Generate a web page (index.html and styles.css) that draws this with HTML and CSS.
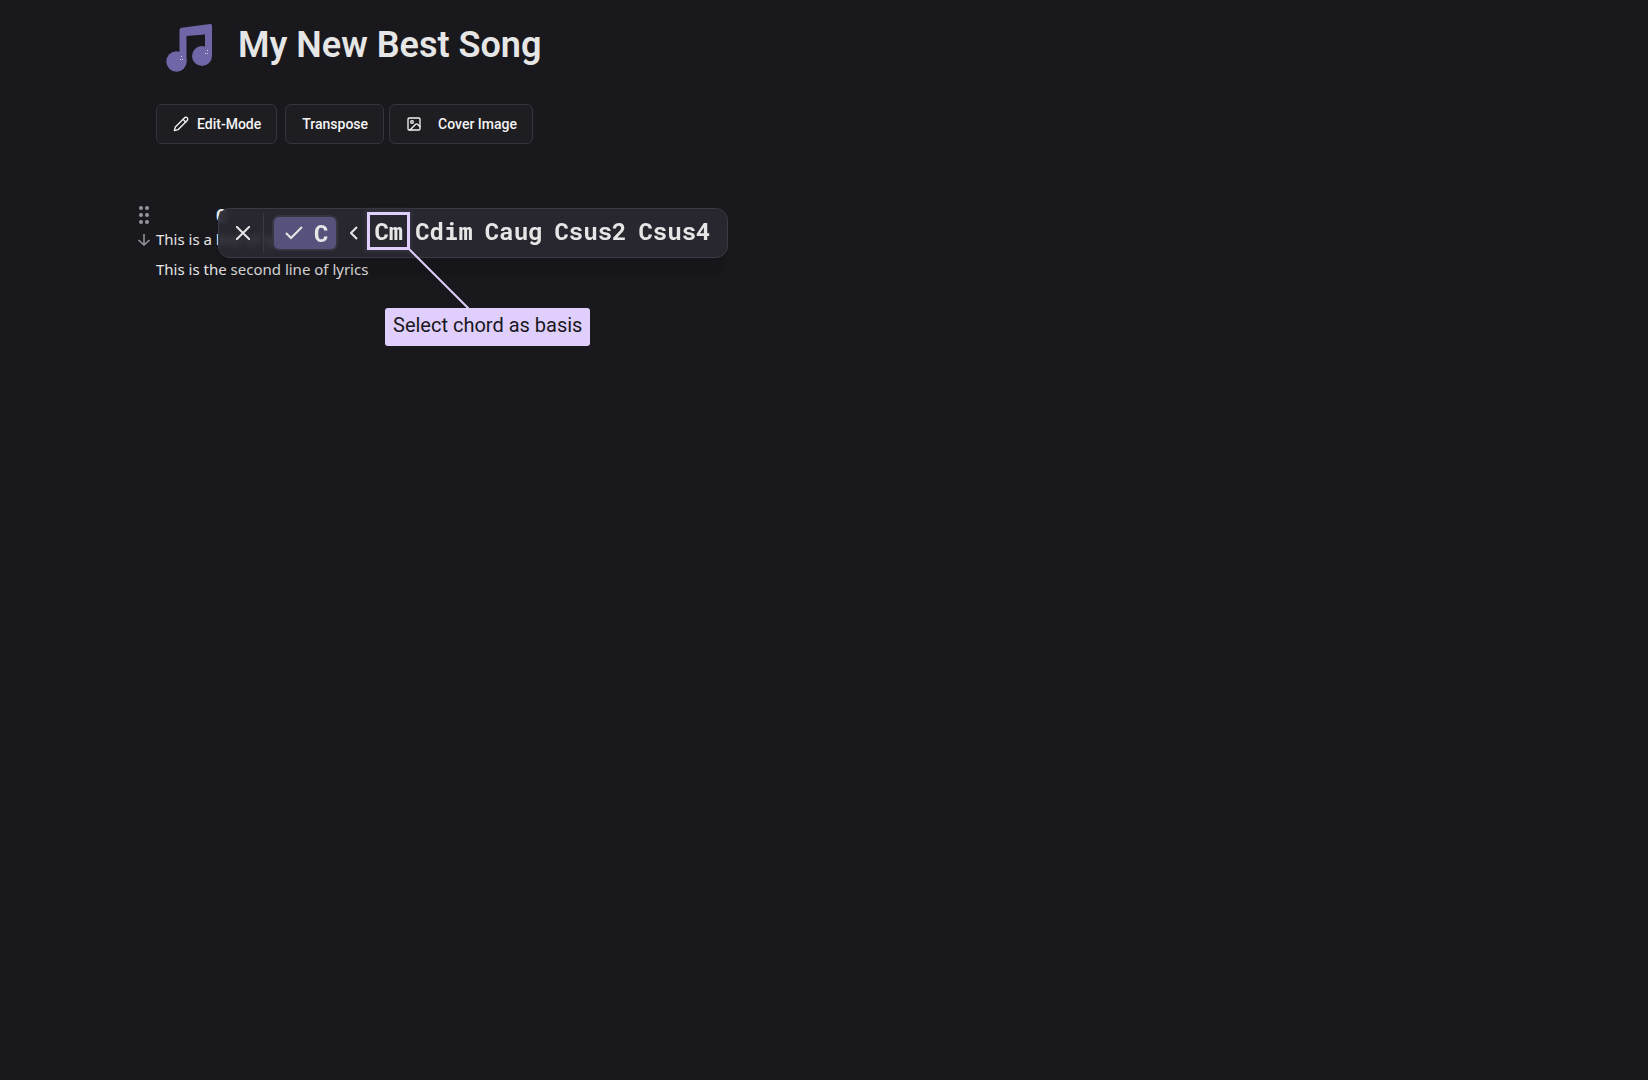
FILE: index.html
```html
<!DOCTYPE html>
<html lang="en">

<head>
    <meta charset="UTF-8">
    <meta name="viewport" content="width=device-width, initial-scale=1.0">
    <title>My New Best Song</title>
    <link rel="stylesheet" href="styles.css">
</head>

<body>
    <main class="page">
        <header class="title">
            <svg class="note" viewBox="0 0 48 50" aria-hidden="true">
                <path d="M13.500 7Q13.500 5 15.500 4.700L44 1Q46 .8 46 2.500V33H39V11.500L20.500 13V39H13.500Z" />
                <circle cx="10.500" cy="38.500" r="10.200" />
                <circle cx="36" cy="33" r="10" />
                <g class="spark">
                    <rect x="14" y="36" width="1" height="1" />
                    <rect x="16" y="36" width="1" height="1" />
                    <rect x="15" y="33" width="1" height="1" />
                    <rect x="39" y="30" width="1" height="1" />
                    <rect x="41" y="30" width="1" height="1" />
                    <rect x="41" y="27" width="1" height="1" />
                </g>
            </svg>
            <h1>My New Best Song</h1>
        </header>

        <div class="actions">
            <button type="button" class="edit">
                <svg class="icon" viewBox="0 0 24 24" aria-hidden="true">
                    <path d="M17 3a2.850 2.850 0 1 1 4 4L7.500 20.500 2 22l1.500-5.500Z" />
                    <path d="m15 5 4 4" />
                </svg>
                Edit-Mode
            </button>
            <button type="button">Transpose</button>
            <button type="button" class="cover">
                <svg class="icon" viewBox="0 0 24 24" aria-hidden="true">
                    <rect x="3" y="3" width="18" height="18" rx="2" />
                    <circle cx="9" cy="9" r="2" />
                    <path d="m6 21 8.500-8.500a2 2 0 0 1 2.800 0L21 16" />
                </svg>
                Cover Image
            </button>
        </div>

        <section class="song">
            <div class="handles">
                <svg class="drag" viewBox="0 0 10 18" aria-hidden="true">
                    <circle cx="2" cy="2" r="2" />
                    <circle cx="8" cy="2" r="2" />
                    <circle cx="2" cy="9" r="2" />
                    <circle cx="8" cy="9" r="2" />
                    <circle cx="2" cy="16" r="2" />
                    <circle cx="8" cy="16" r="2" />
                </svg>
                <svg class="down" viewBox="0 0 24 24" aria-hidden="true">
                    <path d="M12 0V22M1 12L12 22L23 12" />
                </svg>
            </div>
            <p class="chord">C</p>
            <p class="line">This is a line of lyrics</p>
            <p class="line">This is the second line of lyrics</p>

            <div class="picker">
                <button type="button" class="close" aria-label="Close">
                    <svg viewBox="0 0 14 14" aria-hidden="true">
                        <path d="M0 0L14 14M14 0L0 14" />
                    </svg>
                </button>
                <button type="button" class="current">
                    <svg viewBox="0 0 18 14" aria-hidden="true">
                        <path d="M1 7L6 12L17 1" />
                    </svg>
                    C
                </button>
                <button type="button" class="back" aria-label="Back">
                    <svg viewBox="0 0 8 14" aria-hidden="true">
                        <path d="M7 1L1 7L7 13" />
                    </svg>
                </button>
                <div class="chords">
                    <button type="button" class="marked">Cm</button>
                    <button type="button">Cdim</button>
                    <button type="button">Caug</button>
                    <button type="button">Csus2</button>
                    <button type="button">Csus4</button>
                </div>
            </div>

            <svg class="pointer" viewBox="0 0 60 60" aria-hidden="true">
                <path d="M0 0L60 60" />
            </svg>
            <div class="callout">Select chord as basis</div>
        </section>
    </main>
</body>

</html>
```
FILE: styles.css
```css
* {
    box-sizing: border-box;
}

body {
    margin: 0;
    background: #19181c;
    color: #e6e6e6;
    font-family: Roboto, "Liberation Sans", sans-serif;
}

h1,
p {
    margin: 0;
}

button {
    margin: 0;
    padding: 0;
    border: 0;
    background: none;
    color: inherit;
    font: inherit;
}

svg {
    display: block;
    flex: none;
    fill: none;
    stroke: currentColor;
    stroke-width: 2;
}

.page {
    min-height: 100vh;
    padding: 16px 156px;
}

/* title */
.title {
    display: flex;
    align-items: center;
    gap: 24px;
    height: 64px;
    padding-left: 10px;
}

.title h1 {
    padding-bottom: 6px;
    font-size: 36px;
    line-height: 48px;
    font-weight: 600;
}

.note {
    width: 48px;
    height: 50px;
    fill: #6e66a6;
    stroke: none;
}

.spark {
    fill: #d8d4f0;
}

/* buttons under the title */
.actions {
    display: flex;
    gap: 5px;
    margin-top: 24px;
}

.actions button {
    display: flex;
    align-items: center;
    gap: 8px;
    height: 40px;
    padding: 0 15px 1px 16px;
    border: 1px solid #35343f;
    border-radius: 6px;
    background: #1e1d22;
    color: #f4f4f4;
    font-size: 14px;
    font-weight: 500;
}

.actions .edit {
    margin-right: 3px;
}

.actions .cover {
    gap: 16px;
}

.icon {
    width: 16px;
    height: 16px;
    stroke-linecap: round;
    stroke-linejoin: round;
}

/* lyrics */
.song {
    position: relative;
    margin-top: 60px;
    font-family: "Noto Sans", "Open Sans", sans-serif;
}

.handles {
    position: absolute;
    top: 2px;
    left: -18px;
    color: #97969c;
}

.drag {
    width: 10px;
    height: 18px;
    margin: 0 1px 10px;
    fill: currentColor;
    stroke: none;
}

.down {
    width: 12px;
    height: 12px;
    stroke-width: 3;
}

.chord {
    margin-bottom: -2px;
    padding-left: 60px;
    font-family: "Roboto Mono", "DejaVu Sans Mono", monospace;
    font-size: 18px;
    line-height: 22px;
    font-weight: 700;
}

.line {
    font-size: 15px;
    line-height: 30px;
}

/* chord picker */
.picker {
    position: absolute;
    top: 4px;
    left: 62px;
    display: flex;
    align-items: center;
    height: 50px;
    padding-right: 17px;
    border: 1px solid #3a3a44;
    border-radius: 12px;
    background: rgba(43, 42, 51, .84);
    box-shadow: 0 20px 4px -2px rgba(0, 0, 0, .1);
    backdrop-filter: blur(3px);
    font-family: "Roboto Mono", "DejaVu Sans Mono", monospace;
    font-size: 24px;
    line-height: 32px;
    font-weight: 700;
}

.close {
    height: 40px;
    padding: 0 13px 0 17px;
    border-right: 1px solid #3a3a44;
}

.close svg {
    width: 14px;
    height: 14px;
}

.current {
    display: flex;
    align-items: center;
    gap: 11px;
    height: 32px;
    margin-left: 10px;
    padding: 0 8px 0 11px;
    border-radius: 5px;
    background: #55527c;
    box-shadow: 0 0 0 2px #35343f;
}

.current svg {
    width: 18px;
    height: 14px;
}

.back {
    padding: 0 9px 0 14px;
}

.back svg {
    width: 8px;
    height: 14px;
}

.chords {
    display: flex;
    align-items: center;
    padding-bottom: 4px;
}

.chords button {
    margin-left: 12px;
}

.chords .marked {
    height: 38px;
    margin: 0 -7px 0 0;
    padding: 0 4px;
    border: 3px solid #e0cffc;
    box-shadow: 0 0 4px 2px #35343f;
}

/* hint */
.pointer {
    position: absolute;
    top: 45px;
    left: 253px;
    width: 60px;
    height: 60px;
    color: #e0cffc;
}

.callout {
    position: absolute;
    top: 104px;
    left: 229px;
    padding: 3px 8px 7px;
    border-radius: 3px;
    background: #e0cffc;
    color: #19181c;
    font-family: Roboto, sans-serif;
    font-size: 20px;
    line-height: 28px;
    white-space: nowrap;
}
```
